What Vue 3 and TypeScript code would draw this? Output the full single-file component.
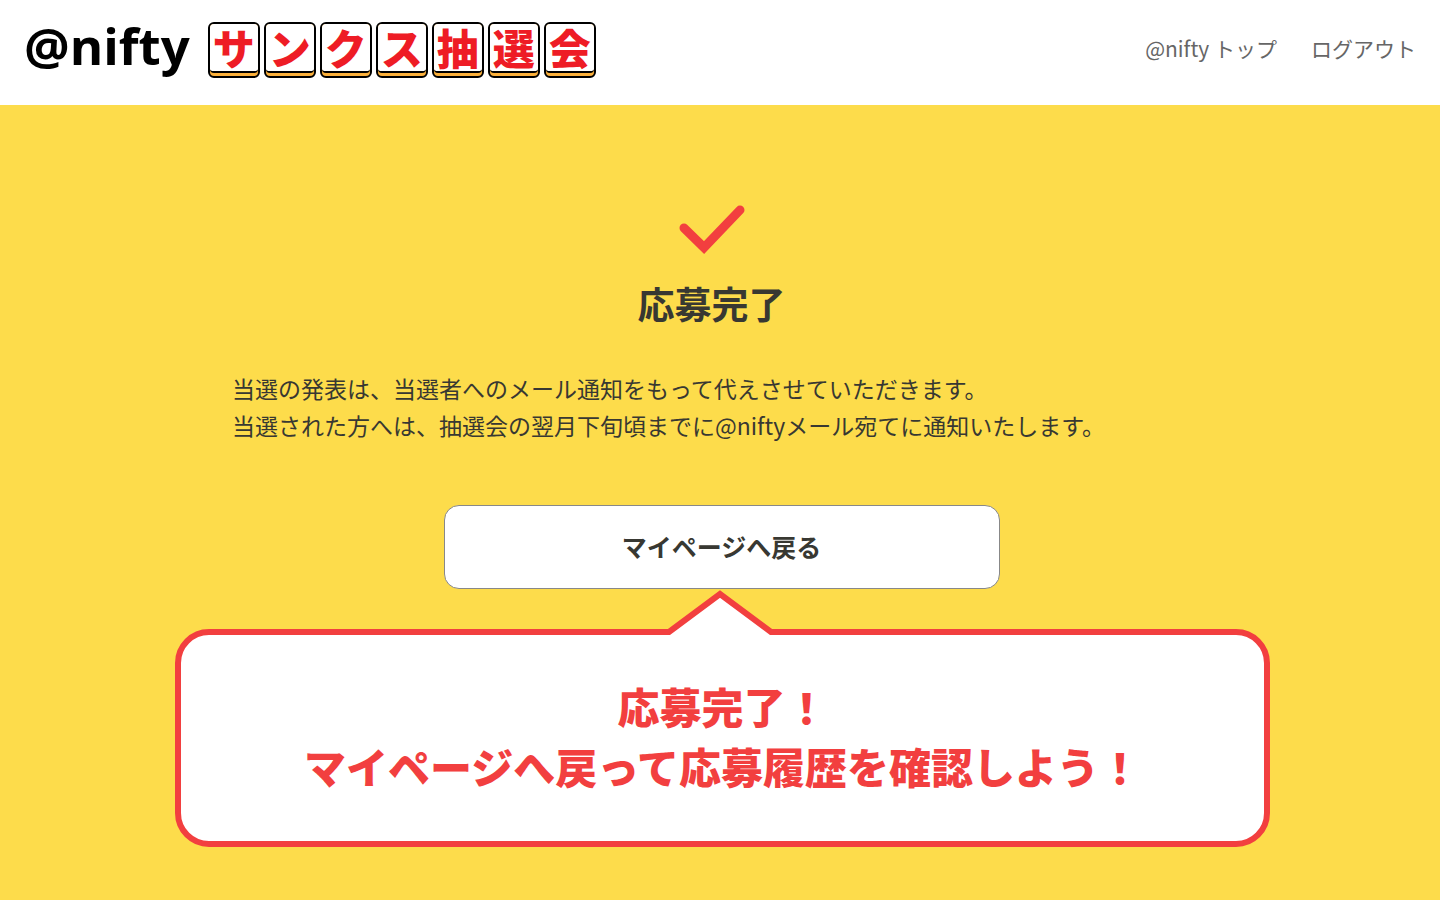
<script setup lang="ts">
interface NavLink {
  label: string
  href: string
}

const tiles: string[] = ['サ', 'ン', 'ク', 'ス', '抽', '選', '会']

const links: NavLink[] = [
  { label: '@nifty トップ', href: '#top' },
  { label: 'ログアウト', href: '#logout' },
]

const notes: string[] = [
  '当選の発表は、当選者へのメール通知をもって代えさせていただきます。',
  '当選された方へは、抽選会の翌月下旬頃までに@niftyメール宛てに通知いたします。',
]
</script>

<template>
  <div class="page">
    <header class="header">
      <a class="logo" href="#home">
        <span class="brand">@nifty</span>
        <span class="tiles">
          <span v-for="tile in tiles" :key="tile" class="tile">
            <span class="face">{{ tile }}</span>
          </span>
        </span>
      </a>
      <nav class="nav">
        <a v-for="link in links" :key="link.href" :href="link.href">{{ link.label }}</a>
      </nav>
    </header>

    <main class="main">
      <section class="done">
        <svg class="check" width="66" height="50" viewBox="0 0 66 50" aria-hidden="true">
          <path d="M5 23 L25 42.500 L61 5" fill="none" stroke="#f23f3f" stroke-width="9" stroke-linecap="round" stroke-linejoin="miter" />
        </svg>
        <h1>応募完了</h1>
      </section>

      <div class="notes">
        <p v-for="note in notes" :key="note">{{ note }}</p>
      </div>

      <button class="back" type="button">マイページへ戻る</button>

      <aside class="bubble">
        <svg class="tail" width="112" height="48" viewBox="0 0 112 48" aria-hidden="true">
          <path d="M4 48 V44 L56 6 L108 44 V48 Z" fill="#fff" />
          <path d="M0 43 H5 L56 5 L107 43 H112" fill="none" stroke="#f23f3f" stroke-width="6" />
        </svg>
        <p>応募完了！</p>
        <p>マイページへ戻って応募履歴を確認しよう！</p>
      </aside>
    </main>
  </div>
</template>

<style>
body {
  margin: 0;
  background: #fddc4b;
}
</style>

<style scoped>
.page {
  min-height: 100vh;
  box-sizing: border-box;
  background: #fddc4b;
  color: #383832;
  font-family: "Noto Sans CJK JP", "Noto Sans", sans-serif;
}

.header {
  display: flex;
  justify-content: space-between;
  align-items: center;
  box-sizing: border-box;
  min-height: 105px;
  padding: 0 24px 6px;
  background: #fff;
}

.logo {
  display: flex;
  align-items: center;
  gap: 18px;
  color: #000;
  text-decoration: none;
}

.brand {
  padding-bottom: 10px;
  font-family: "Open Sans", "Noto Sans", sans-serif;
  font-size: 51px;
  font-weight: 700;
  line-height: 60px;
}

.tiles {
  display: flex;
  gap: 4px;
}

.tile {
  box-sizing: border-box;
  width: 52px;
  height: 56px;
  border: 2px solid #000;
  border-radius: 6px;
  background: #fbb03b;
}

.face {
  display: block;
  box-sizing: border-box;
  height: 49px;
  border-bottom: 2px solid #000;
  border-radius: 4px;
  background: #fff;
  color: #ee1c25;
  font-size: 42px;
  font-weight: 900;
  line-height: 46px;
  text-align: center;
}

.nav {
  display: flex;
  gap: 34px;
  padding-bottom: 4px;
}

.nav a {
  color: #666;
  font-size: 21px;
  line-height: 32px;
  text-decoration: none;
}

.main {
  display: flex;
  flex-direction: column;
  padding: 100px 170px 52px 175px;
}

.done {
  display: flex;
  flex-direction: column;
  align-items: center;
  margin-right: 22px;
}

.check {
  display: block;
}

h1 {
  margin: 22px 0 0;
  font-size: 37px;
  font-weight: 700;
  line-height: 52px;
}

.notes {
  margin: 41px 0 0 57px;
}

.notes p {
  margin: 0;
  font-size: 23px;
  line-height: 37px;
}

.back {
  align-self: center;
  box-sizing: border-box;
  width: 556px;
  max-width: 100%;
  height: 84px;
  margin: 61px 2px 40px 0;
  padding-bottom: 4px;
  border: 1px solid #888;
  border-radius: 15px;
  background: #fff;
  color: #383832;
  font-family: inherit;
  font-size: 25px;
  font-weight: 700;
  cursor: pointer;
}

.bubble {
  position: relative;
  padding: 41px 24px 45px;
  border: 6px solid #f23f3f;
  border-radius: 34px;
  background: #fff;
  color: #f23f3f;
  text-align: center;
}

.bubble p {
  margin: 0;
  font-size: 42px;
  font-weight: 900;
  line-height: 60px;
}

.tail {
  position: absolute;
  top: -46px;
  left: calc(50% - 59px);
}
</style>
